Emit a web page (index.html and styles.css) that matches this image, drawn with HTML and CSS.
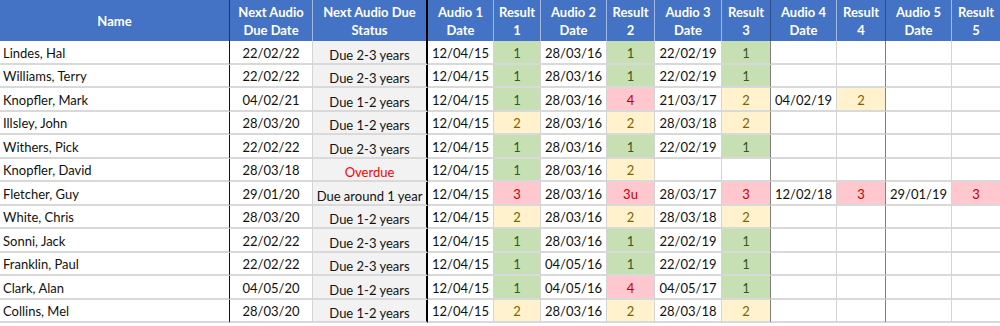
FILE: index.html
```html
<!DOCTYPE html>
<html lang="en">
<head>
<meta charset="utf-8">
<title>Audio schedule</title>
<link rel="stylesheet" href="styles.css">
</head>
<body>
<div class="sheet">
  <div class="hd">Name</div>
  <div class="hd">Next Audio<br>Due Date</div>
  <div class="hd">Next Audio Due<br>Status</div>
  <div class="hd">Audio 1<br>Date</div>
  <div class="hd">Result<br>1</div>
  <div class="hd">Audio 2<br>Date</div>
  <div class="hd">Result<br>2</div>
  <div class="hd">Audio 3<br>Date</div>
  <div class="hd">Result<br>3</div>
  <div class="hd">Audio 4<br>Date</div>
  <div class="hd">Result<br>4</div>
  <div class="hd">Audio 5<br>Date</div>
  <div class="hd">Result<br>5</div>

  <div>Lindes, Hal</div><div>22/02/22</div><div>Due 2-3 years</div>
  <div>12/04/15</div><div class="g">1</div><div>28/03/16</div><div class="g">1</div><div>22/02/19</div><div class="g">1</div>
  <div></div><div></div><div></div><div></div>

  <div>Williams, Terry</div><div>22/02/22</div><div>Due 2-3 years</div>
  <div>12/04/15</div><div class="g">1</div><div>28/03/16</div><div class="g">1</div><div>22/02/19</div><div class="g">1</div>
  <div></div><div></div><div></div><div></div>

  <div>Knopfler, Mark</div><div>04/02/21</div><div>Due 1-2 years</div>
  <div>12/04/15</div><div class="g">1</div><div>28/03/16</div><div class="r">4</div><div>21/03/17</div><div class="y">2</div>
  <div>04/02/19</div><div class="y">2</div><div></div><div></div>

  <div>Illsley, John</div><div>28/03/20</div><div>Due 1-2 years</div>
  <div>12/04/15</div><div class="y">2</div><div>28/03/16</div><div class="y">2</div><div>28/03/18</div><div class="y">2</div>
  <div></div><div></div><div></div><div></div>

  <div>Withers, Pick</div><div>22/02/22</div><div>Due 2-3 years</div>
  <div>12/04/15</div><div class="g">1</div><div>28/03/16</div><div class="g">1</div><div>22/02/19</div><div class="g">1</div>
  <div></div><div></div><div></div><div></div>

  <div>Knopfler, David</div><div>28/03/18</div><div class="overdue">Overdue</div>
  <div>12/04/15</div><div class="g">1</div><div>28/03/16</div><div class="y">2</div><div></div><div></div>
  <div></div><div></div><div></div><div></div>

  <div>Fletcher, Guy</div><div>29/01/20</div><div>Due around 1 year</div>
  <div>12/04/15</div><div class="r">3</div><div>28/03/16</div><div class="r">3u</div><div>28/03/17</div><div class="r">3</div>
  <div>12/02/18</div><div class="r">3</div><div>29/01/19</div><div class="r">3</div>

  <div>White, Chris</div><div>28/03/20</div><div>Due 1-2 years</div>
  <div>12/04/15</div><div class="y">2</div><div>28/03/16</div><div class="y">2</div><div>28/03/18</div><div class="y">2</div>
  <div></div><div></div><div></div><div></div>

  <div>Sonni, Jack</div><div>22/02/22</div><div>Due 2-3 years</div>
  <div>12/04/15</div><div class="g">1</div><div>28/03/16</div><div class="g">1</div><div>22/02/19</div><div class="g">1</div>
  <div></div><div></div><div></div><div></div>

  <div>Franklin, Paul</div><div>22/02/22</div><div>Due 2-3 years</div>
  <div>12/04/15</div><div class="g">1</div><div>04/05/16</div><div class="g">1</div><div>22/02/19</div><div class="g">1</div>
  <div></div><div></div><div></div><div></div>

  <div>Clark, Alan</div><div>04/05/20</div><div>Due 1-2 years</div>
  <div>12/04/15</div><div class="g">1</div><div>04/05/16</div><div class="r">4</div><div>04/05/17</div><div class="g">1</div>
  <div></div><div></div><div></div><div></div>

  <div>Collins, Mel</div><div>28/03/20</div><div>Due 1-2 years</div>
  <div>12/04/15</div><div class="y">2</div><div>28/03/16</div><div class="y">2</div><div>28/03/18</div><div class="y">2</div>
  <div></div><div></div><div></div><div></div>
</div>
</body>
</html>
```

FILE: styles.css
```css
html, body {
  margin: 0;
  padding: 0;
  background: #ffffff;
}

body {
  font-family: Lato, "Open Sans", sans-serif;
  font-size: 13px;
  color: #111111;
}

.sheet {
  display: grid;
  width: 1000px;
  grid-template-columns: 230px 83px 115px 66px 47px 66px 48px 67px 49px 66px 49px 66px 48px;
  grid-template-rows: 41px;
  grid-auto-rows: 23.5px;
}

.sheet > div {
  box-sizing: border-box;
  display: flex;
  align-items: flex-end;
  justify-content: center;
  padding-bottom: 2px;
  line-height: 16px;
  white-space: nowrap;
  border-right: 1px solid #d4d4d4;
  border-bottom: 2px solid #d9d9d9;
  overflow: hidden;
}

/* column-level styling */
.sheet > div:nth-child(13n+1) {
  justify-content: flex-start;
  padding-left: 3px;
  border-right-color: #111111;
}

.sheet > div:nth-child(13n+3) {
  background: #f2f2f2;
  border-right: 2px solid #000000;
  padding-bottom: 0;
}

.sheet > div:nth-child(13n+9),
.sheet > div:nth-child(13n+11) {
  border-right-color: #808080;
}

.sheet > div:nth-child(13n) {
  border-right: none;
}

/* header */
.sheet > div.hd {
  background: #4472c4;
  color: #ffffff;
  font-weight: 700;
  text-align: center;
  align-items: center;
  justify-content: center;
  padding: 0;
  line-height: 18px;
  border-bottom: none;
  border-right-color: #a4b8df;
}

.sheet > div.hd:nth-child(1) {
  border-right-color: #1f3864;
}

.sheet > div.hd:nth-child(3) {
  border-right-color: #000000;
}

.sheet > div.hd:nth-child(9),
.sheet > div.hd:nth-child(11) {
  border-right-color: #2f4d86;
}

/* result fills */
.sheet > .g {
  background: #c6e0b4;
  color: #375623;
}

.sheet > .y {
  background: #fff2cc;
  color: #7f6000;
}

.sheet > .r {
  background: #ffc7ce;
  color: #c00000;
}

.sheet > .overdue {
  color: #ff0000;
}
```
